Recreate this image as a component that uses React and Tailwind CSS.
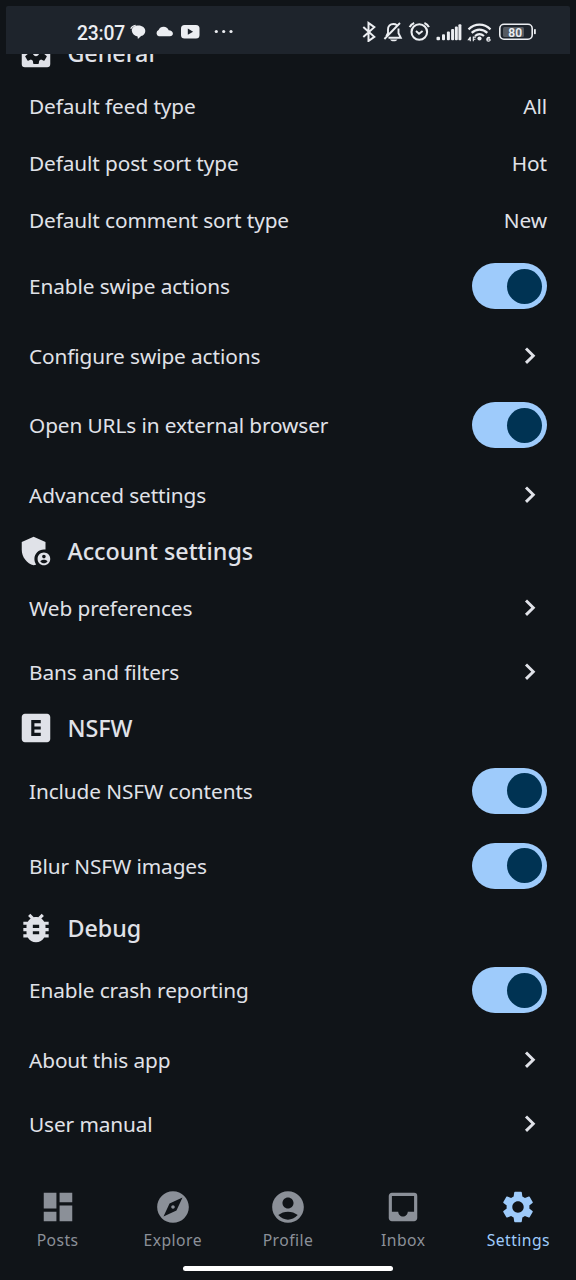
import {
  MdAccountCircle,
  MdAdminPanelSettings,
  MdBugReport,
  MdDashboard,
  MdExplicit,
  MdExplore,
  MdInbox,
  MdSettings,
  MdSettingsApplications,
} from "react-icons/md";

function StatusBar() {
  return (
    <header className="mx-[6px] mt-[6px] flex h-12 shrink-0 items-center rounded-t-[2px] bg-[#1e242c] text-[#eceef2]">
      <span className="ml-[71px] w-[53px] whitespace-nowrap pt-[7px] font-['Roboto',sans-serif] text-[19.3px] font-medium leading-5 tracking-[-0.2px]">
        23:07
      </span>
      <svg className="h-6 w-[106px] shrink-0" viewBox="130 18 106 24" fill="currentColor">
        <path d="M131.800 30.800c-.3-3.300 2.500-5.400 6.600-5.400s6.900 2.400 6.900 5.500c0 2.500-1.700 4.500-4.200 5.200l-3.200 3-.3-2.700c-3.200-.4-5.500-2.600-5.800-5.600z" />
        <path d="M130.700 28.800c.9-2 2.600-3.100 5-3.400" fill="none" stroke="currentColor" strokeWidth="1.100" />
        <path d="M158.800 36.200a3.300 3.300 0 0 1-.2-6.200 5.500 5.500 0 0 1 10.100.2c2.400.1 4.200 1.300 4.200 3.200 0 1.700-1.300 2.800-3 2.800z" />
        <rect x="181" y="25" width="18.500" height="13.500" rx="3.500" />
        <path d="M187.800 28.600v6.200l5.300-3.100z" fill="#1e242c" />
        <circle cx="216.300" cy="31.500" r="1.600" />
        <circle cx="223.700" cy="31.500" r="1.600" />
        <circle cx="231" cy="31.500" r="1.600" />
      </svg>
      <svg className="ml-auto mr-[30px] h-6 w-[180px] shrink-0" viewBox="360 18 180 24" fill="none" stroke="currentColor" strokeWidth="2">
        <path d="M363.300 27l11 9.800-5.800 4.200V23l5.800 4.200-11 9.800" strokeWidth="2" />
        <path d="M386.300 36.200l1.700-3.200v-3.500c0-3.300 2.200-5.500 5.300-5.500 1.500 0 2.700.4 3.600 1.200M398.500 28.500v4.700l2.300 4.600h-12.300M400 23l-15.600 16" strokeWidth="1.900" />
        <path d="M390 39.400c1.500 2.600 6 2.600 7.500 0z" fill="currentColor" stroke="none" />
        <circle cx="419.300" cy="32" r="7.800" strokeWidth="2.100" />
        <path d="M416 31l3 2.800 3.600-2.900" strokeWidth="1.900" />
        <path d="M409.700 27.200c.8-2 2.300-3.400 4.500-4.200M428.900 27.200c-.8-2-2.300-3.400-4.500-4.200" strokeWidth="2.100" />
        <g fill="currentColor" stroke="none">
          <rect x="436.500" y="36.700" width="3.500" height="3.500" rx="1" />
          <rect x="442" y="34.300" width="3" height="5.900" rx="1" />
          <rect x="446.900" y="31.600" width="3" height="8.600" rx="1" />
          <rect x="451.100" y="29" width="3" height="11.200" rx="1" />
          <rect x="454.900" y="26.600" width="2.900" height="13.600" rx="1" />
          <rect x="458.400" y="24.200" width="3" height="16" rx="1" />
          <circle cx="479.500" cy="38.500" r="2.100" />
        </g>
        <path d="M470.300 36.800v4.400M470.600 39.700h-2.200l1.900-2.600M473.300 41.300v-4.200h2.600M473.300 39.200h2.100" strokeWidth="1.100" />
        <path d="M468.500 29.400c6.500-6.300 15.500-6.300 22 0M471.700 32.900c4.600-4.400 11-4.400 15.600 0M475 36c2.700-2.300 6.300-2.300 9 0" strokeWidth="2.200" />
        <path d="M490 37.600c-2.300-.7-3.200.3-3.200 1.800 0 2.400 3.300 2.200 3.300.5 0-1.400-1.900-1.400-3-.4" strokeWidth="1.200" />
        <rect x="503" y="27" width="21" height="10" rx="1.500" fill="#555a61" stroke="none" />
        <rect x="499.800" y="24.300" width="32.400" height="14.900" rx="4.200" strokeWidth="1.600" />
        <rect x="534" y="29" width="1.800" height="5.200" rx=".8" fill="currentColor" stroke="none" />
        <text x="515.200" y="36.500" textAnchor="middle" fill="currentColor" stroke="none" className="font-['Roboto',sans-serif] text-[12px] font-semibold">
          80
        </text>
      </svg>
    </header>
  );
}

function Section({ icon: Icon, title, className = "h-[49px]" }) {
  return (
    <div className={`flex shrink-0 items-center pl-[17.4px] ${className}`}>
      <Icon className="size-[38px] shrink-0" />
      <h2 className="ml-3 whitespace-nowrap text-[23.3px] font-medium leading-8">{title}</h2>
    </div>
  );
}

function Row({ label, className = "h-16", children }) {
  return (
    <div className={`flex shrink-0 items-center justify-between pl-[29px] pr-[29px] ${className}`}>
      <span className="whitespace-nowrap text-[20.8px] leading-7 tracking-[-0.1px]">{label}</span>
      {children}
    </div>
  );
}

function ValueRow({ label, value }) {
  return (
    <Row label={label} className="h-[57px]">
      <span className="text-[20.8px] leading-7 tracking-[-0.1px]">{value}</span>
    </Row>
  );
}

function LinkRow({ label }) {
  return (
    <Row label={label}>
      <svg className="size-[34px]" viewBox="0 0 34 34" fill="none" stroke="currentColor" strokeWidth="2.900">
        <path d="M13 9.500l7.300 7.200-7.300 7.200" />
      </svg>
    </Row>
  );
}

function SwitchRow({ label }) {
  return (
    <Row label={label} className="h-[75px]">
      <button role="switch" aria-checked="true" className="flex h-[46px] w-[75px] items-center justify-end rounded-full bg-[#9ecbfb] pr-[5.5px]">
        <span className="size-[35px] rounded-full bg-[#003353]" />
      </button>
    </Row>
  );
}

const tabs = [
  { label: "Posts", icon: MdDashboard },
  { label: "Explore", icon: MdExplore },
  { label: "Profile", icon: MdAccountCircle },
  { label: "Inbox", icon: MdInbox },
  { label: "Settings", icon: MdSettings, active: true },
];

export default function App() {
  return (
    <div className="flex h-[1280px] w-[576px] flex-col overflow-hidden bg-[#101418] font-['Noto_Sans',sans-serif] text-[#e0e2e8]">
      <StatusBar />
      <main className="flex h-[1101px] shrink-0 flex-col overflow-hidden">
        <Section icon={MdSettingsApplications} title="General" className="-mt-[26px] h-[49.5px]" />
        <ValueRow label="Default feed type" value="All" />
        <ValueRow label="Default post sort type" value="Hot" />
        <ValueRow label="Default comment sort type" value="New" />
        <SwitchRow label="Enable swipe actions" />
        <LinkRow label="Configure swipe actions" />
        <SwitchRow label="Open URLs in external browser" />
        <LinkRow label="Advanced settings" />
        <Section icon={MdAdminPanelSettings} title="Account settings" />
        <LinkRow label="Web preferences" />
        <LinkRow label="Bans and filters" />
        <Section icon={MdExplicit} title="NSFW" className="h-[49.5px]" />
        <SwitchRow label="Include NSFW contents" />
        <SwitchRow label="Blur NSFW images" />
        <Section icon={MdBugReport} title="Debug" className="h-[49.5px]" />
        <SwitchRow label="Enable crash reporting" />
        <LinkRow label="About this app" />
        <LinkRow label="User manual" />
      </main>
      <nav className="mt-[33px] grid shrink-0 grid-cols-5">
        {tabs.map(({ label, icon: Icon, active }) => (
          <div key={label} className={`flex flex-col items-center ${active ? "text-[#9ecbfb]" : "text-[#8b9098]"}`}>
            <Icon className="size-[38px]" />
            <span className="mt-[2px] text-[15.7px] leading-6 tracking-[0.45px]">{label}</span>
          </div>
        ))}
      </nav>
      <div className="mx-auto mt-[14px] h-[5px] w-[210px] shrink-0 rounded-full bg-white" />
    </div>
  );
}
